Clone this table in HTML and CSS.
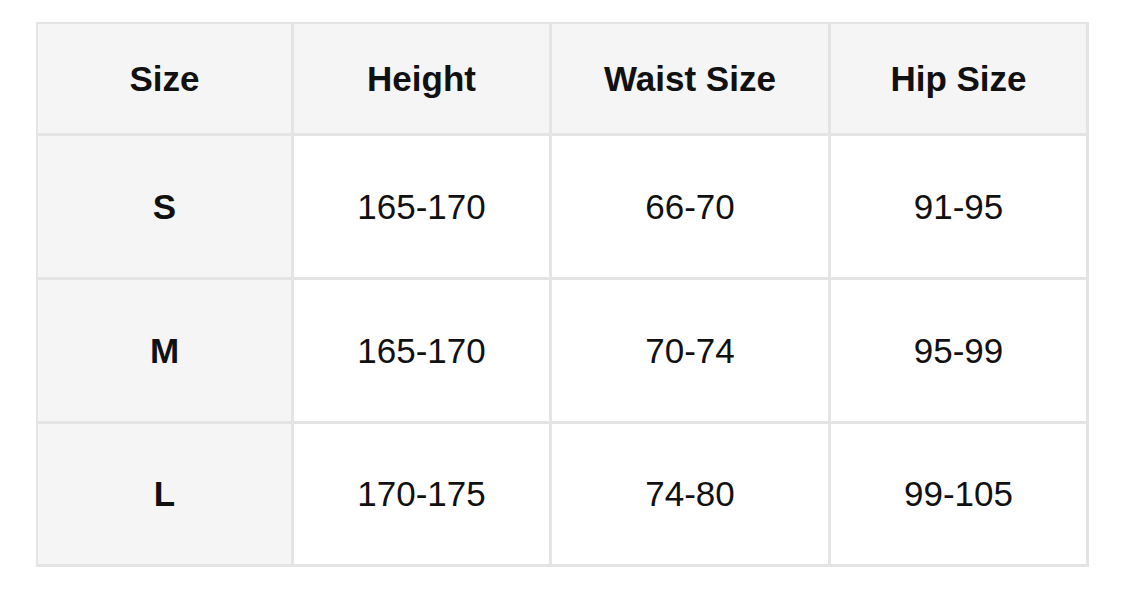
FILE: index.html
```html
<!DOCTYPE html>
<html>
<head>
<meta charset="utf-8">
<link rel="stylesheet" href="styles.css">
</head>
<body>
<div class="chart">
  <div class="cell head">Size</div>
  <div class="cell head">Height</div>
  <div class="cell head">Waist Size</div>
  <div class="cell head">Hip Size</div>

  <div class="cell label">S</div>
  <div class="cell">165-170</div>
  <div class="cell">66-70</div>
  <div class="cell">91-95</div>

  <div class="cell label">M</div>
  <div class="cell">165-170</div>
  <div class="cell">70-74</div>
  <div class="cell">95-99</div>

  <div class="cell label">L</div>
  <div class="cell">170-175</div>
  <div class="cell">74-80</div>
  <div class="cell">99-105</div>
</div>
</body>
</html>
```

FILE: styles.css
```css
html, body {
  margin: 0;
  background: #ffffff;
}
body {
  padding: 22px 0 0 36px;
  font-family: "Liberation Sans", Arial, Helvetica, sans-serif;
  color: #111111;
}
.chart {
  display: inline-grid;
  grid-template-columns: 253px 255px 276px 255px;
  grid-template-rows: 109px 141px 141px 140px;
  gap: 3px;
  padding: 2px 3px 3px 2px;
  background: #e4e4e4;
}
.cell {
  display: flex;
  align-items: center;
  justify-content: center;
  background: #ffffff;
  font-size: 35px;
}
.head {
  background: #f5f5f5;
  font-weight: bold;
}
.label {
  background: #f5f5f5;
  font-weight: bold;
}
```
